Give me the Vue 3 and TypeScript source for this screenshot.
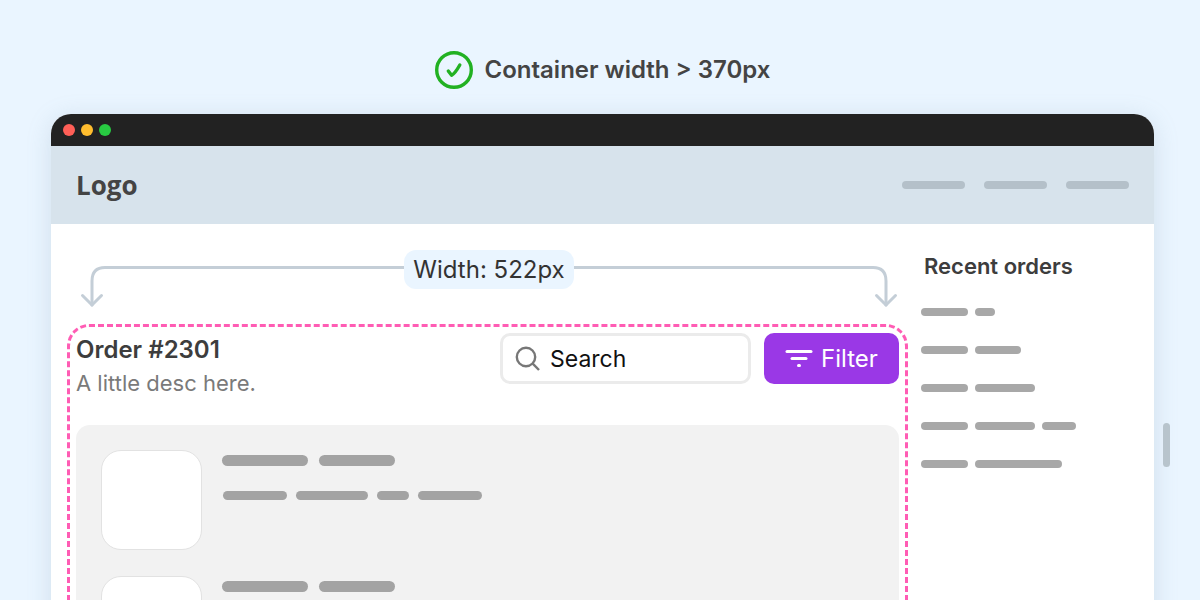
<script setup lang="ts">
import { ref } from 'vue'

const search = ref<string>('')

const navItems: number[] = [63, 63, 63]

const recentOrders: number[][] = [
  [47, 20],
  [47, 46],
  [47, 60],
  [47, 60, 34],
  [47, 87],
]

interface OrderItem {
  title: number[]
  details: number[]
}

const items: OrderItem[] = Array.from({ length: 3 }, () => ({
  title: [86, 76],
  details: [64, 72, 32, 64],
}))
</script>

<template>
  <div class="stage">
    <div class="caption">
      <svg class="check" viewBox="0 0 38 38" aria-hidden="true">
        <circle cx="19" cy="19" r="17.3" />
        <path d="M13.3 20 L16.600 24.300 Q20 22.500 24.800 14" />
      </svg>
      <h1>Container width &gt; 370px</h1>
    </div>

    <div class="window">
      <div class="titlebar">
        <span class="dot red"></span>
        <span class="dot yellow"></span>
        <span class="dot green"></span>
      </div>

      <header class="site-header">
        <span class="logo">Logo</span>
        <nav class="nav" aria-label="Main">
          <span v-for="(w, i) in navItems" :key="i" class="nav-bar" :style="{ width: w + 'px' }"></span>
        </nav>
      </header>

      <div class="columns">
        <main class="main">
          <div class="ruler">
            <svg class="arrow" viewBox="0 0 36 42" aria-hidden="true">
              <path d="M36 1.500 H25 Q12 1.500 12 15 V39" />
              <path d="M2.500 29.500 L12 39 L21.500 29.500" />
            </svg>
            <span class="rule"></span>
            <span class="measure">Width: 522px</span>
            <span class="rule"></span>
            <svg class="arrow" viewBox="0 0 36 42" aria-hidden="true">
              <path d="M0 1.500 H11 Q24 1.500 24 15 V39" />
              <path d="M14.500 29.500 L24 39 L33.500 29.500" />
            </svg>
          </div>

          <section class="container">
            <div class="toolbar">
              <div class="heading">
                <h2>Order #2301</h2>
                <p>A little desc here.</p>
              </div>
              <label class="search">
                <svg viewBox="0 0 26 26" aria-hidden="true">
                  <circle cx="11" cy="11" r="9.200" />
                  <path d="M17.700 17.700 L24 24" />
                </svg>
                <input v-model="search" type="text" placeholder="Search" aria-label="Search" />
              </label>
              <button type="button" class="filter">
                <svg viewBox="0 0 28 20" aria-hidden="true">
                  <path d="M2 2.500 H26" />
                  <path d="M7 9.500 H21" />
                  <path d="M13.500 16.500 H14.500" />
                </svg>
                Filter
              </button>
            </div>

            <div class="list">
              <article v-for="(item, i) in items" :key="i" class="item">
                <div class="thumb"></div>
                <div class="lines">
                  <div class="title-line">
                    <span v-for="(w, j) in item.title" :key="j" :style="{ width: w + 'px' }"></span>
                  </div>
                  <div class="detail-line">
                    <span v-for="(w, j) in item.details" :key="j" :style="{ width: w + 'px' }"></span>
                  </div>
                </div>
              </article>
            </div>
          </section>
        </main>

        <aside class="recent">
          <h3>Recent orders</h3>
          <ul>
            <li v-for="(row, i) in recentOrders" :key="i">
              <span v-for="(w, j) in row" :key="j" :style="{ width: w + 'px' }"></span>
            </li>
          </ul>
        </aside>
      </div>

      <span class="handle"></span>
    </div>
  </div>
</template>

<style>
body {
  margin: 0;
  background: #eaf5ff;
}
</style>

<style scoped>
.stage {
  box-sizing: border-box;
  height: 100vh;
  padding: 51px 46px 0 51px;
  overflow: hidden;
  background: #eaf5ff;
  color: #3d3d3d;
  font-family: Inter, "Liberation Sans", sans-serif;
}

h1,
h2,
h3,
p,
ul {
  margin: 0;
  padding: 0;
}

.caption {
  display: flex;
  align-items: center;
  justify-content: center;
  gap: 12px;
  margin-bottom: 25px;
}

.caption h1 {
  font-size: 24px;
  line-height: 38px;
  font-weight: 600;
  color: #444;
}

.check {
  width: 38px;
  height: 38px;
  fill: none;
  stroke: #22b122;
  stroke-width: 3.4;
  stroke-linecap: round;
  stroke-linejoin: round;
}

.window {
  position: relative;
  border-radius: 20px 20px 0 0;
  background: #fff;
  box-shadow: 0 4px 24px rgba(120, 150, 170, 0.22);
}

.titlebar {
  display: flex;
  align-items: center;
  gap: 6px;
  height: 32px;
  padding: 0 12px;
  border-radius: 20px 20px 0 0;
  background: #222;
}

.dot {
  width: 12px;
  height: 12px;
  border-radius: 50%;
}

.red {
  background: #ff5f57;
}

.yellow {
  background: #ffbd2e;
}

.green {
  background: #28ca42;
}

.site-header {
  display: flex;
  align-items: center;
  justify-content: space-between;
  height: 78px;
  padding: 0 25px;
  background: #d7e3ec;
}

.logo {
  font-family: "Open Sans", sans-serif;
  font-size: 26px;
  line-height: 36px;
  font-weight: 700;
  color: #444;
}

.nav {
  display: flex;
  gap: 19px;
}

.nav-bar {
  height: 8px;
  border-radius: 4px;
  background: #b4c0c9;
}

.columns {
  display: grid;
  grid-template-columns: minmax(0, 1fr) 233px;
  gap: 13px;
  padding: 26px 0 0 16px;
}

.ruler {
  display: flex;
  align-items: flex-start;
  height: 74px;
  padding: 0 10px 0 13px;
}

.arrow {
  flex: none;
  width: 36px;
  height: 42px;
  margin-top: 16px;
  fill: none;
  stroke: #c4ced7;
  stroke-width: 3;
  stroke-linecap: round;
  stroke-linejoin: round;
}

.rule {
  flex: 1;
  height: 3px;
  margin-top: 16px;
  background: #c4ced7;
}

.measure {
  padding: 0 9px;
  border-radius: 12px;
  background: #eaf5ff;
  font-size: 24px;
  line-height: 39px;
  color: #333;
}

.container {
  padding: 6px;
  border: 3px dashed #ff5cb4;
  border-radius: 22px;
}

.toolbar {
  display: flex;
  align-items: flex-start;
  gap: 13px;
  height: 92px;
}

.heading {
  flex: 1;
}

.heading h2 {
  font-size: 24px;
  line-height: 34px;
  font-weight: 600;
}

.heading p {
  font-size: 22px;
  line-height: 32px;
  color: #7a7a7a;
}

.search {
  box-sizing: border-box;
  display: flex;
  align-items: center;
  gap: 9px;
  width: 251px;
  height: 51px;
  padding: 0 12px;
  border: 3px solid #ebebeb;
  border-radius: 10px;
  background: #fff;
}

.search svg {
  flex: none;
  width: 26px;
  height: 26px;
  fill: none;
  stroke: #777;
  stroke-width: 2.400;
}

.search input {
  min-width: 0;
  flex: 1;
  padding: 0;
  border: 0;
  outline: 0;
  background: transparent;
  font: inherit;
  font-size: 23px;
  color: #111;
}

.search input::placeholder {
  color: #111;
  opacity: 1;
}

.filter {
  display: flex;
  align-items: center;
  justify-content: center;
  gap: 8px;
  width: 135px;
  height: 51px;
  padding: 0;
  border: 0;
  border-radius: 10px;
  background: #9a38e6;
  color: #fff;
  font: inherit;
  font-size: 24px;
}

.filter svg {
  width: 28px;
  height: 20px;
  fill: none;
  stroke: #fff;
  stroke-width: 3;
  stroke-linecap: round;
}

.list {
  display: flex;
  flex-direction: column;
  gap: 26px;
  padding: 25px;
  border-radius: 14px;
  background: #f2f2f2;
}

.item {
  display: flex;
  gap: 20px;
}

.thumb {
  box-sizing: border-box;
  width: 101px;
  height: 100px;
  border: 1px solid #e2e2e2;
  border-radius: 20px;
  background: #fff;
}

.lines {
  display: flex;
  flex-direction: column;
  gap: 25px;
  padding-top: 5px;
}

.title-line,
.detail-line {
  display: flex;
}

.title-line {
  gap: 11px;
}

.detail-line {
  gap: 9px;
  padding-left: 1px;
}

.title-line span,
.detail-line span {
  border-radius: 6px;
  background: #a3a3a3;
}

.title-line span {
  height: 11px;
}

.detail-line span {
  height: 9px;
}

.recent h3 {
  padding: 0 3px;
  font-size: 22px;
  line-height: 32px;
  font-weight: 600;
}

.recent ul {
  display: grid;
  gap: 30px;
  padding-top: 26px;
  list-style: none;
}

.recent li {
  display: flex;
  gap: 7px;
}

.recent li span {
  height: 8px;
  border-radius: 4px;
  background: #a8a8a8;
}

.handle {
  position: absolute;
  top: 309px;
  right: -16px;
  width: 7px;
  height: 44px;
  border-radius: 4px;
  background: #b8c4cc;
}
</style>
